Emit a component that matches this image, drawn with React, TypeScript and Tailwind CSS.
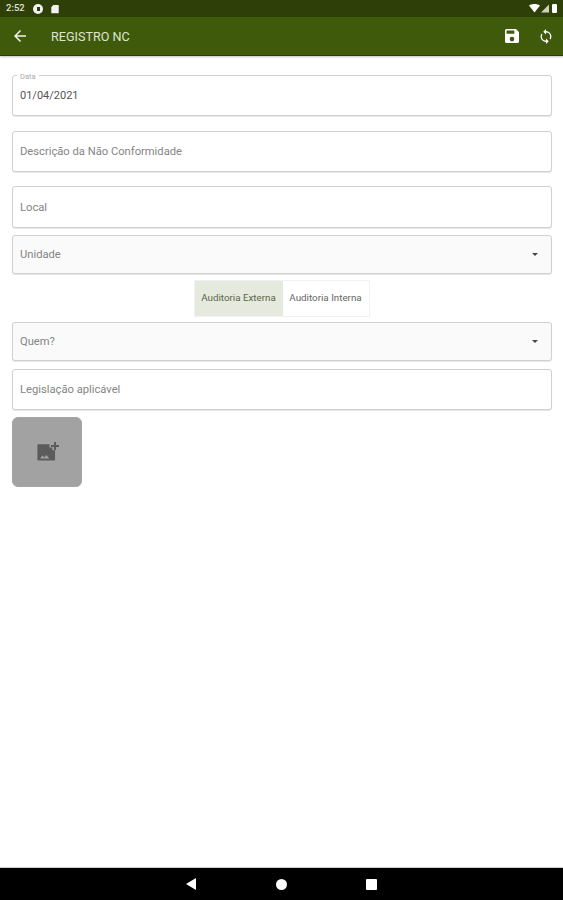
import { ReactNode } from 'react';

function Field({ label, className, children }: { label?: string; className: string; children?: ReactNode }) {
    return (
        <div className={`flex items-center rounded-[3px] border border-[#d0d0d0] pl-[7px] pr-2 pt-[2px] shadow-[0_1px_1px_rgba(0,0,0,0.1)] ${className}`}>
            {label && <span className="text-[11.2px] text-[#858585]">{label}</span>}
            {children}
        </div>
    );
}

function Caret() {
    return <span className="ml-auto mr-[5px] mb-[2px] h-0 w-0 border-x-[3px] border-t-[3px] border-x-transparent border-t-[#444]" />;
}

export default function App() {
    return (
        <div className="flex h-[900px] w-[563px] flex-col overflow-hidden bg-white font-['Roboto',sans-serif]">
            {/* status bar */}
            <div className="flex h-[17px] items-center bg-[#2e3f08] pl-[6px] pr-[6px] text-white">
                <span className="w-[20px] text-[9.5px] font-medium text-[#e0e4d6]">2:52</span>
                <span className="ml-[7px] flex h-[10px] w-[10px] items-center justify-center rounded-full bg-[#f2f2f2]">
                    <span className="h-[4px] w-[3px] bg-[#2e3f08]" />
                </span>
                <svg className="ml-[8px]" width="8" height="10" viewBox="0 0 9 10">
                    <path d="M2.5 0.5H8a.7.7 0 0 1 .7.7v8a.7.7 0 0 1-.7.7H1a.7.7 0 0 1-.7-.7V3z" fill="#f2f2f2" />
                </svg>
                <svg className="ml-auto" width="11" height="9" viewBox="0 0 11 9">
                    <path d="M0 1.500C3 -.5 8 -.5 11 1.500L5.500 8.500z" fill="#fff" />
                </svg>
                <svg className="ml-[1px]" width="8" height="9" viewBox="0 0 8 9">
                    <path d="M8 0.500V8.500H0z" fill="#cdd2bf" />
                </svg>
                <span className="ml-[3px] h-[9px] w-[5px] rounded-[1px] bg-white" />
            </div>

            {/* app bar */}
            <div className="flex h-[39px] items-center border-b border-[#2b3a08] bg-[#3f5a0b] pl-[14px] pr-[11px] text-white shadow-[0_1px_2px_rgba(0,0,0,0.25)]">
                <svg width="12" height="12" viewBox="0 0 16 16" fill="#f2f4ea">
                    <path d="M16 7H3.800l5.600-5.600L8 0 0 8l8 8 1.400-1.400L3.800 9H16z" />
                </svg>
                <span className="ml-[25px] mt-[2px] text-[12.600px] text-[#dfe4d0]">REGISTRO NC</span>
                <svg className="ml-auto" width="14" height="14" viewBox="3 3 18 18" fill="#fff">
                    <path d="M17 3H5a2 2 0 0 0-2 2v14a2 2 0 0 0 2 2h14a2 2 0 0 0 2-2V7zm-5 16a3 3 0 1 1 0-6 3 3 0 0 1 0 6zm3-10H5V5h10z" />
                </svg>
                <svg className="ml-[21px]" width="12" height="15" viewBox="4 1 16 22" fill="#fff">
                    <path d="M12 4V1L8 5l4 4V6a6 6 0 0 1 6 6c0 1-.25 1.970-.7 2.800l1.460 1.460A7.930 7.930 0 0 0 20 12a8 8 0 0 0-8-8zm0 14a6 6 0 0 1-6-6c0-1 .25-1.970.7-2.800L5.240 7.740A7.930 7.930 0 0 0 4 12a8 8 0 0 0 8 8v3l4-4-4-4z" />
                </svg>
            </div>

            {/* form */}
            <div className="flex flex-1 flex-col pl-[12px] pr-[11px] pt-[19px]">
                <div className="relative">
                    <Field className="h-[41px] bg-white">
                        <span className="text-[11px] text-[#555]">01/04/2021</span>
                    </Field>
                    <span className="absolute left-[5px] top-[-1px] bg-white px-[3px] text-[7.500px] leading-[6px] text-[#aaa]">Data</span>
                </div>
                <Field label="Descrição da Não Conformidade" className="mt-[15px] h-[41px] bg-white" />
                <Field label="Local" className="mt-[14px] h-[42px] bg-white" />
                <Field label="Unidade" className="mt-[7px] h-[39px] bg-[#fafafa]">
                    <Caret />
                </Field>

                <div className="mt-[6px] flex h-[37px] justify-center pr-[1px]">
                    <div className="flex border border-[#f2f2f2]">
                        <span className="flex w-[88px] items-center justify-center bg-[#e6e9dd] text-[9.800px] text-[#5a6648]">Auditoria Externa</span>
                        <span className="flex w-[86px] items-center justify-center bg-white text-[9.800px] text-[#666]">Auditoria Interna</span>
                    </div>
                </div>

                <Field label="Quem?" className="mt-[5px] h-[39px] bg-[#fafafa]">
                    <Caret />
                </Field>
                <Field label="Legislação aplicável" className="mt-[8px] h-[41px] bg-white" />

                <div className="mt-[7px] flex h-[70px] w-[70px] items-center justify-center rounded-[6px] border border-[#a5a5a5] bg-[#a2a2a2]">
                    <svg width="24" height="24" viewBox="0 0 24 24" fill="#5c5c5c">
                        <path d="M21 2h-2v3h-3v2h3v3h2V7h3V5h-3z" />
                        <path d="M2.500 4.500h12V8h3v3h3v10a1 1 0 0 1-1 1h-17a1 1 0 0 1-1-1V5.500a1 1 0 0 1 1-1z" transform="translate(1 0) scale(0.93)" />
                        <path d="M5 18.500l2.500-3 1.800 2 2-2.500 3 3.500z" fill="#a2a2a2" />
                    </svg>
                </div>
            </div>

            {/* nav bar */}
            <div className="flex h-[33px] items-center justify-center border-t border-[#ccc] bg-black">
                <span className="h-0 w-0 border-y-[6px] border-r-[10px] border-y-transparent border-r-white" />
                <span className="ml-[80px] h-[11px] w-[11px] rounded-full bg-white" />
                <span className="ml-[79px] h-[11px] w-[11px] rounded-[1px] bg-white" />
            </div>
        </div>
    );
}
